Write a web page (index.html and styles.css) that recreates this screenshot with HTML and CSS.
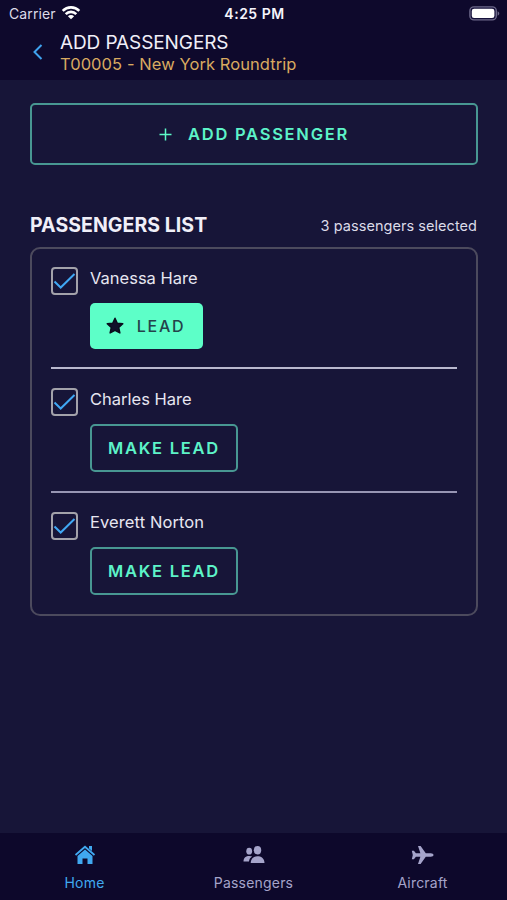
FILE: index.html
```
<!DOCTYPE html>
<html lang="en">
<head>
<meta charset="utf-8">
<title>Add Passengers</title>
<link rel="stylesheet" href="styles.css">
</head>
<body>
<header class="header">
  <div class="status">
    <div class="carrier"><span>Carrier</span>
      <svg width="20" height="15" viewBox="0 0 20 15" fill="none" stroke="#fff" stroke-width="2.6"><path d="M1.7 5.8a11.8 11.8 0 0 1 16.6 0M4.7 9.1a7.5 7.5 0 0 1 10.6 0"/><path d="M10 14.2 6.9 11.2a4.4 4.4 0 0 1 6.2 0Z" fill="#fff" stroke="none"/></svg>
    </div>
    <div class="time">4:25 PM</div>
    <svg class="battery" width="31" height="15" viewBox="0 0 31 15"><rect x=".9" y=".9" width="26.4" height="13" rx="4" fill="#15103a" stroke="#6c6889" stroke-width="1.4"/><rect x="2.8" y="2.8" width="22.6" height="9.2" rx="2.3" fill="#fff"/><path d="M28.6 5.2c2.2.8 2.2 3.7 0 4.5Z" fill="#6c6889"/></svg>
  </div>
  <div class="titlebar">
    <svg class="back" width="12" height="18" viewBox="0 0 12 18" fill="none" stroke="#3fa2ee" stroke-width="2"><path d="M10.500 2 3.500 9l7 7"/></svg>
    <div>
      <h1 class="title">ADD PASSENGERS</h1>
      <div class="trip">T00005 - New York Roundtrip</div>
    </div>
  </div>
</header>
<main class="main">
  <button class="btn add"><svg width="13" height="13" viewBox="0 0 13 13" stroke="#5dfbc8" stroke-width="1.5"><path d="M6.500.5v12M.5 6.500h12"/></svg><span>ADD PASSENGER</span></button>
  <div class="list-head"><h2 class="list-title">PASSENGERS LIST</h2><span class="count">3 passengers selected</span></div>
  <section class="card">
    <div class="row first">
      <span class="check"><svg width="23" height="23" viewBox="0 0 23 23"><path d="m1.500 12.500 6.200 6L21.500 5"/></svg></span>
      <div><div class="name">Vanessa Hare</div>
        <button class="btn lead"><svg width="18" height="18" viewBox="0 0 18 18"><path d="m9 1.200 2.300 5 5.500.6-4.100 3.700 1.200 5.500L9 13.300 4.100 16l1.200-5.500-4.100-3.700 5.500-.6Z" fill="#10102a" stroke="#0a0b1c" stroke-width="1.400" stroke-linejoin="round"/></svg><span>LEAD</span></button></div>
    </div>
    <div class="row second">
      <span class="check"><svg width="23" height="23" viewBox="0 0 23 23"><path d="m1.500 12.500 6.200 6L21.500 5"/></svg></span>
      <div><div class="name">Charles Hare</div><button class="btn make"><span>MAKE LEAD</span></button></div>
    </div>
    <div class="row third">
      <span class="check"><svg width="23" height="23" viewBox="0 0 23 23"><path d="m1.500 12.500 6.200 6L21.500 5"/></svg></span>
      <div><div class="name everett">Everett Norton</div><button class="btn make"><span>MAKE LEAD</span></button></div>
    </div>
  </section>
</main>
<nav class="tabs">
  <a class="tab active"><svg width="22" height="20" viewBox="0 0 22 20"><path d="M1.500 10 11 1.700 20.500 10" fill="none" stroke="currentColor" stroke-width="1.800"/><path d="M15 1h3v5l-3-2.500ZM11 4.500l7.500 6.600V19h-5v-5.500h-5V19h-5v-7.900Z" fill="currentColor"/></svg><span>Home</span></a>
  <a class="tab"><svg width="22" height="20" viewBox="0 0 22 20" fill="currentColor"><ellipse cx="14.500" cy="5.300" rx="3.700" ry="4.200"/><path d="M7.700 18C8 13 11 11.300 14.500 11.300S21.200 13 21.500 18Z"/><ellipse cx="6.200" cy="6.200" rx="2.900" ry="3.400"/><path d="M.5 16.500C.6 12.600 3 11 6.200 11c1.200 0 2.200.2 3 .6-2 1.200-3 2.700-3.200 4.900Z"/></svg><span>Passengers</span></a>
  <a class="tab"><svg width="23" height="20" viewBox="0 0 23 20" fill="currentColor"><path d="M22.500 10c0 1-1.200 1.700-2.700 1.700h-5L9.600 19H7l2.400-7.300H4.900l-2 2.600H.8L1.800 10 .8 5.700h2.100l2 2.600h4.500L7 1h2.600l5.200 7.300h5c1.500 0 2.700.7 2.700 1.700Z"/></svg><span>Aircraft</span></a>
</nav>
</body>
</html>
```
FILE: styles.css
```
* { box-sizing: border-box; }
body {
  margin: 0;
  height: 900px;
  display: flex;
  flex-direction: column;
  background: #171538;
  color: #f0eff8;
  font-family: Inter, "Liberation Sans", sans-serif;
  white-space: nowrap;
}
h1, h2 { margin: 0; }
svg { display: block; flex: none; }
.header { height: 80px; background: #0e092c; }
.status {
  height: 27px;
  padding: 0 7px 0 9px;
  display: grid;
  grid-template-columns: 1fr auto 1fr;
  align-items: center;
  font-size: 14px;
}
.carrier { display: flex; align-items: center; gap: 5px; color: #dddbe8; letter-spacing: .1px; }
.carrier svg { margin-top: -2px; }
.time { font-weight: 600; font-size: 14px; letter-spacing: .5px; color: #f5f4fb; }
.battery { justify-self: end; }
.titlebar { display: flex; padding: 4px 0 0 31px; }
.back { margin: 12px 17px 0 0; }
.title { font-size: 19px; line-height: 23px; font-weight: 400; letter-spacing: -.1px; }
.trip { font-size: 16.500px; line-height: 20px; letter-spacing: .07px; color: #d9aa60; }
.main { flex: 1; padding: 23px 29px 0 30px; }
.btn {
  display: flex;
  align-items: center;
  justify-content: center;
  padding: 0;
  border: 2px solid #489792;
  border-radius: 5px;
  background: transparent;
  color: #5df3c8;
  font: 600 16.500px Inter, "Liberation Sans", sans-serif;
  letter-spacing: 1.750px;
}
.add { width: 100%; height: 62px; gap: 16px; }
.list-head { display: flex; justify-content: space-between; align-items: center; height: 24px; margin-top: 48px; }
.list-title { font-size: 19.500px; font-weight: 650; letter-spacing: .05px; }
.count { margin-right: 1px; font-size: 14.500px; letter-spacing: .05px; color: #dcdbe8; }
.card { height: 369px; margin-top: 10px; padding: 0 19px; border: 2px solid #4c4a5d; border-radius: 10px; }
.row { display: flex; gap: 12px; }
.first { height: 120px; padding-top: 18px; border-bottom: 2px solid #b9b8ce; }
.second { height: 124px; padding-top: 19px; border-bottom: 2px solid #9795b3; }
.third { padding-top: 19px; }
.check { width: 27px; height: 28px; border: 2px solid #a3a2aa; border-radius: 4px; }
.check path { fill: none; stroke: #40a8f4; stroke-width: 2; }
.name { font-size: 16.500px; line-height: 22px; color: #e7e6f1; }
.everett { margin-top: -1px; letter-spacing: .1px; }
.lead { width: 113px; height: 46px; margin-top: 14px; padding-right: 2px; border: 0; background: #5dffc8; color: #24434a; font-weight: 500; font-size: 16px; gap: 13px; }
.make { width: 148px; height: 48px; margin-top: 14px; }
.tabs { height: 67px; display: grid; grid-template-columns: repeat(3, 1fr); padding: 12px 0 0; background: #0d082b; }
.tab { display: flex; flex-direction: column; align-items: center; gap: 9px; color: #a5a4ca; font-size: 14px; line-height: 17px; letter-spacing: .2px; }
.active { color: #40a8f0; }
```
